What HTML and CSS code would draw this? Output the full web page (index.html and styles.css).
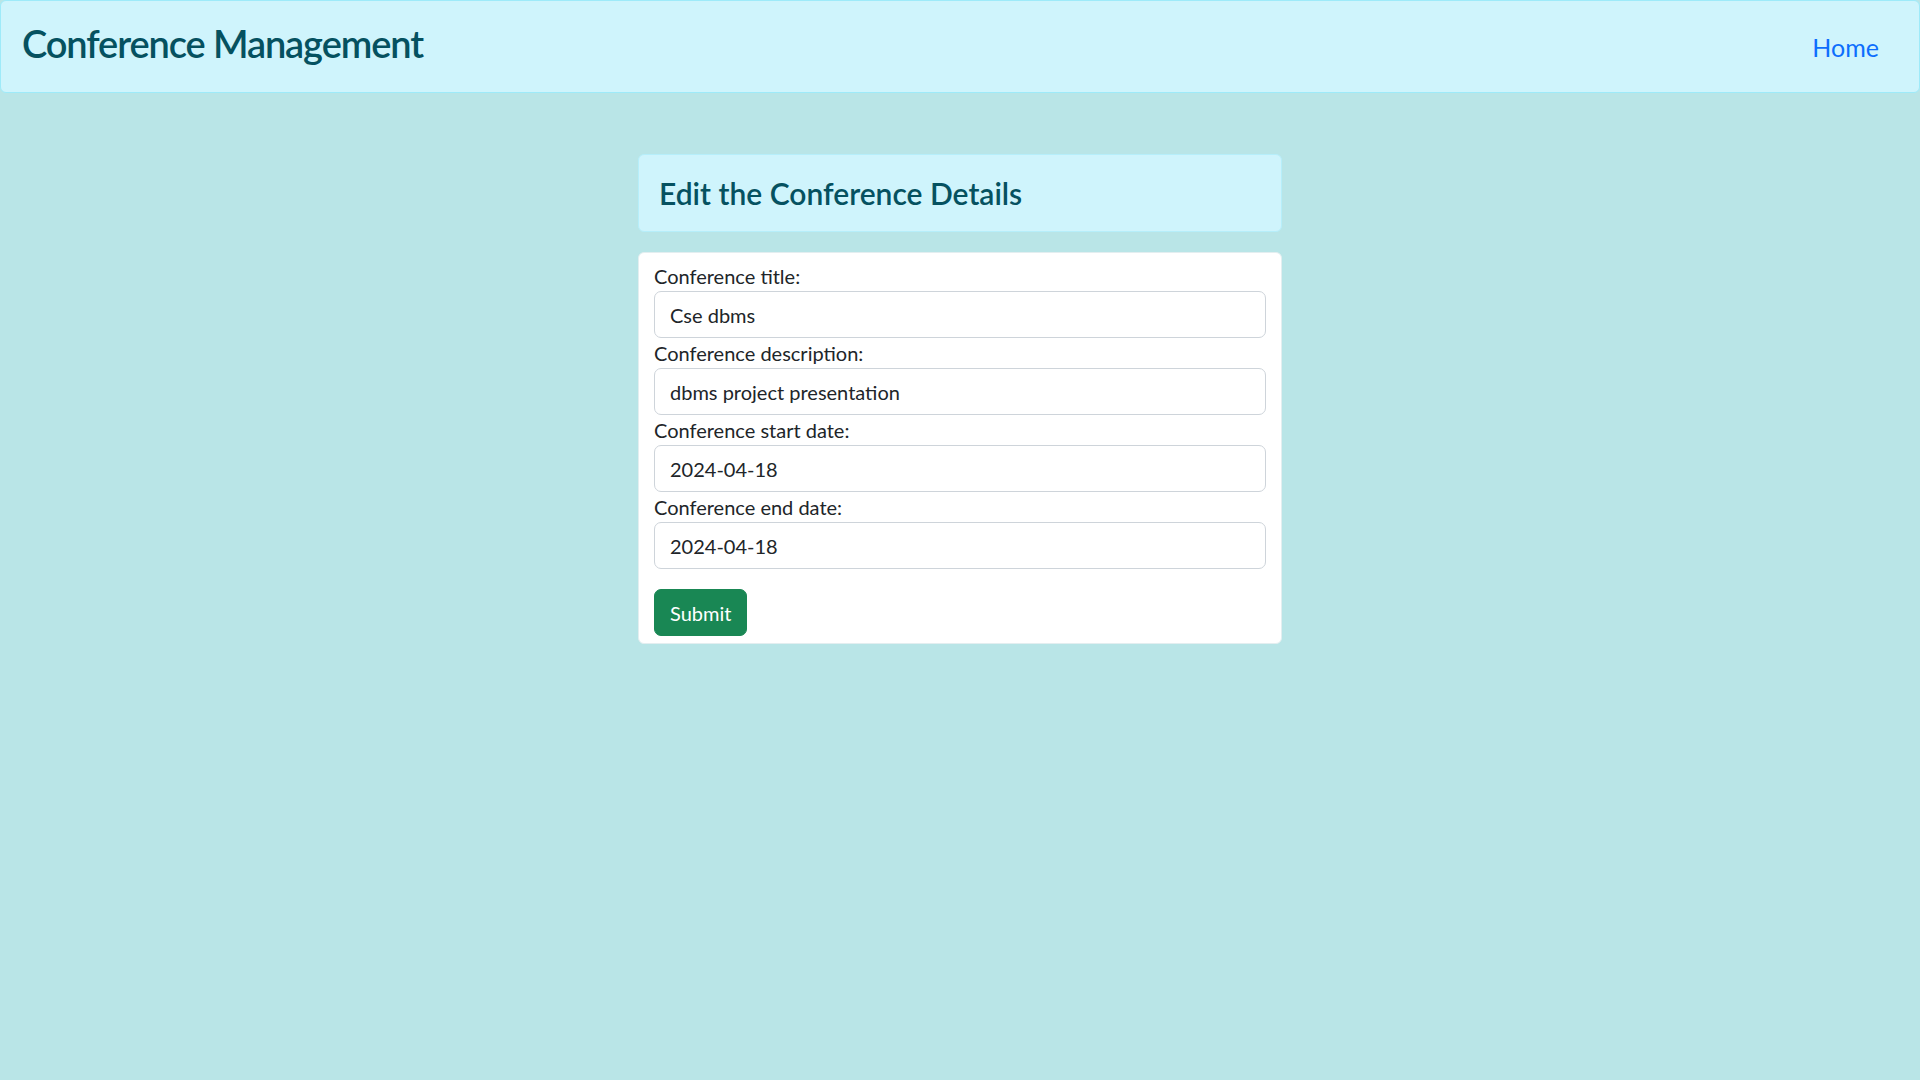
FILE: index.html
```html
<!DOCTYPE html>
<html lang="en">
<head>
<meta charset="utf-8">
<title>Conference Management</title>
<link rel="stylesheet" href="styles.css">
</head>
<body>
<nav class="topbar">
  <h2 class="brand">Conference Management</h2>
  <a class="nav-link" href="#">Home</a>
</nav>
<main class="wrap">
  <div class="panel-head">
    <h4 class="panel-title">Edit the Conference Details</h4>
  </div>
  <form class="panel-form">
    <label class="field-label" for="title">Conference title:</label>
    <input class="field" id="title" type="text" value="Cse dbms">
    <label class="field-label" for="desc">Conference description:</label>
    <input class="field" id="desc" type="text" value="dbms project presentation">
    <label class="field-label" for="start">Conference start date:</label>
    <input class="field" id="start" type="text" value="2024-04-18">
    <label class="field-label" for="end">Conference end date:</label>
    <input class="field" id="end" type="text" value="2024-04-18">
    <button class="btn-submit" type="button">Submit</button>
  </form>
</main>
</body>
</html>
```

FILE: styles.css
```css
* { box-sizing: border-box; }
html, body { margin: 0; padding: 0; }
body {
  background: #b9e5e7;
  font-family: "Lato", "Open Sans", sans-serif;
  font-size: 20px;
  line-height: 1.5;
  color: #212529;
  min-height: 1080px;
}
.topbar {
  height: 93px;
  background: #cff4fc;
  border: 1px solid #9eeaf9;
  border-radius: 6px;
  display: flex;
  justify-content: space-between;
  align-items: flex-start;
  padding: 17px 40px 0 21px;
}
.brand {
  margin: 0;
  font-size: 38px;
  font-weight: 600;
  letter-spacing: -1.1px;
  line-height: 50px;
  color: #055160;
}
.nav-link {
  margin-top: 11px;
  font-size: 25px;
  line-height: 1.5;
  color: #0d6efd;
  text-decoration: none;
}
.wrap {
  width: 644px;
  margin: 61px auto 0;
}
.panel-head {
  background: #cff4fc;
  border: 1px solid #b6eefa;
  border-radius: 6px;
  padding: 20px 20px;
  margin-bottom: 20px;
}
.panel-title {
  margin: 0;
  font-size: 30px;
  font-weight: 600;
  line-height: 1.2;
  color: #055160;
}
.panel-form {
  background: #fff;
  border: 1px solid #e3eef0;
  border-radius: 6px;
  padding: 8px 15px 7px;
  display: flex;
  flex-direction: column;
  align-items: flex-start;
}
.field-label {
  display: block;
  line-height: 30px;
  font-size: 20px;
  color: #212529;
}
.field {
  width: 100%;
  height: 47px;
  font: inherit;
  font-size: 20px;
  color: #212529;
  background: #fff;
  border: 1px solid #ced4da;
  border-radius: 7px;
  padding: 7px 15px;
  outline: none;
}
.btn-submit {
  margin-top: 20px;
  height: 47px;
  padding: 7px 15px;
  font: inherit;
  font-size: 20px;
  color: #fff;
  background: #198754;
  border: 1px solid #198754;
  border-radius: 7px;
}
```
